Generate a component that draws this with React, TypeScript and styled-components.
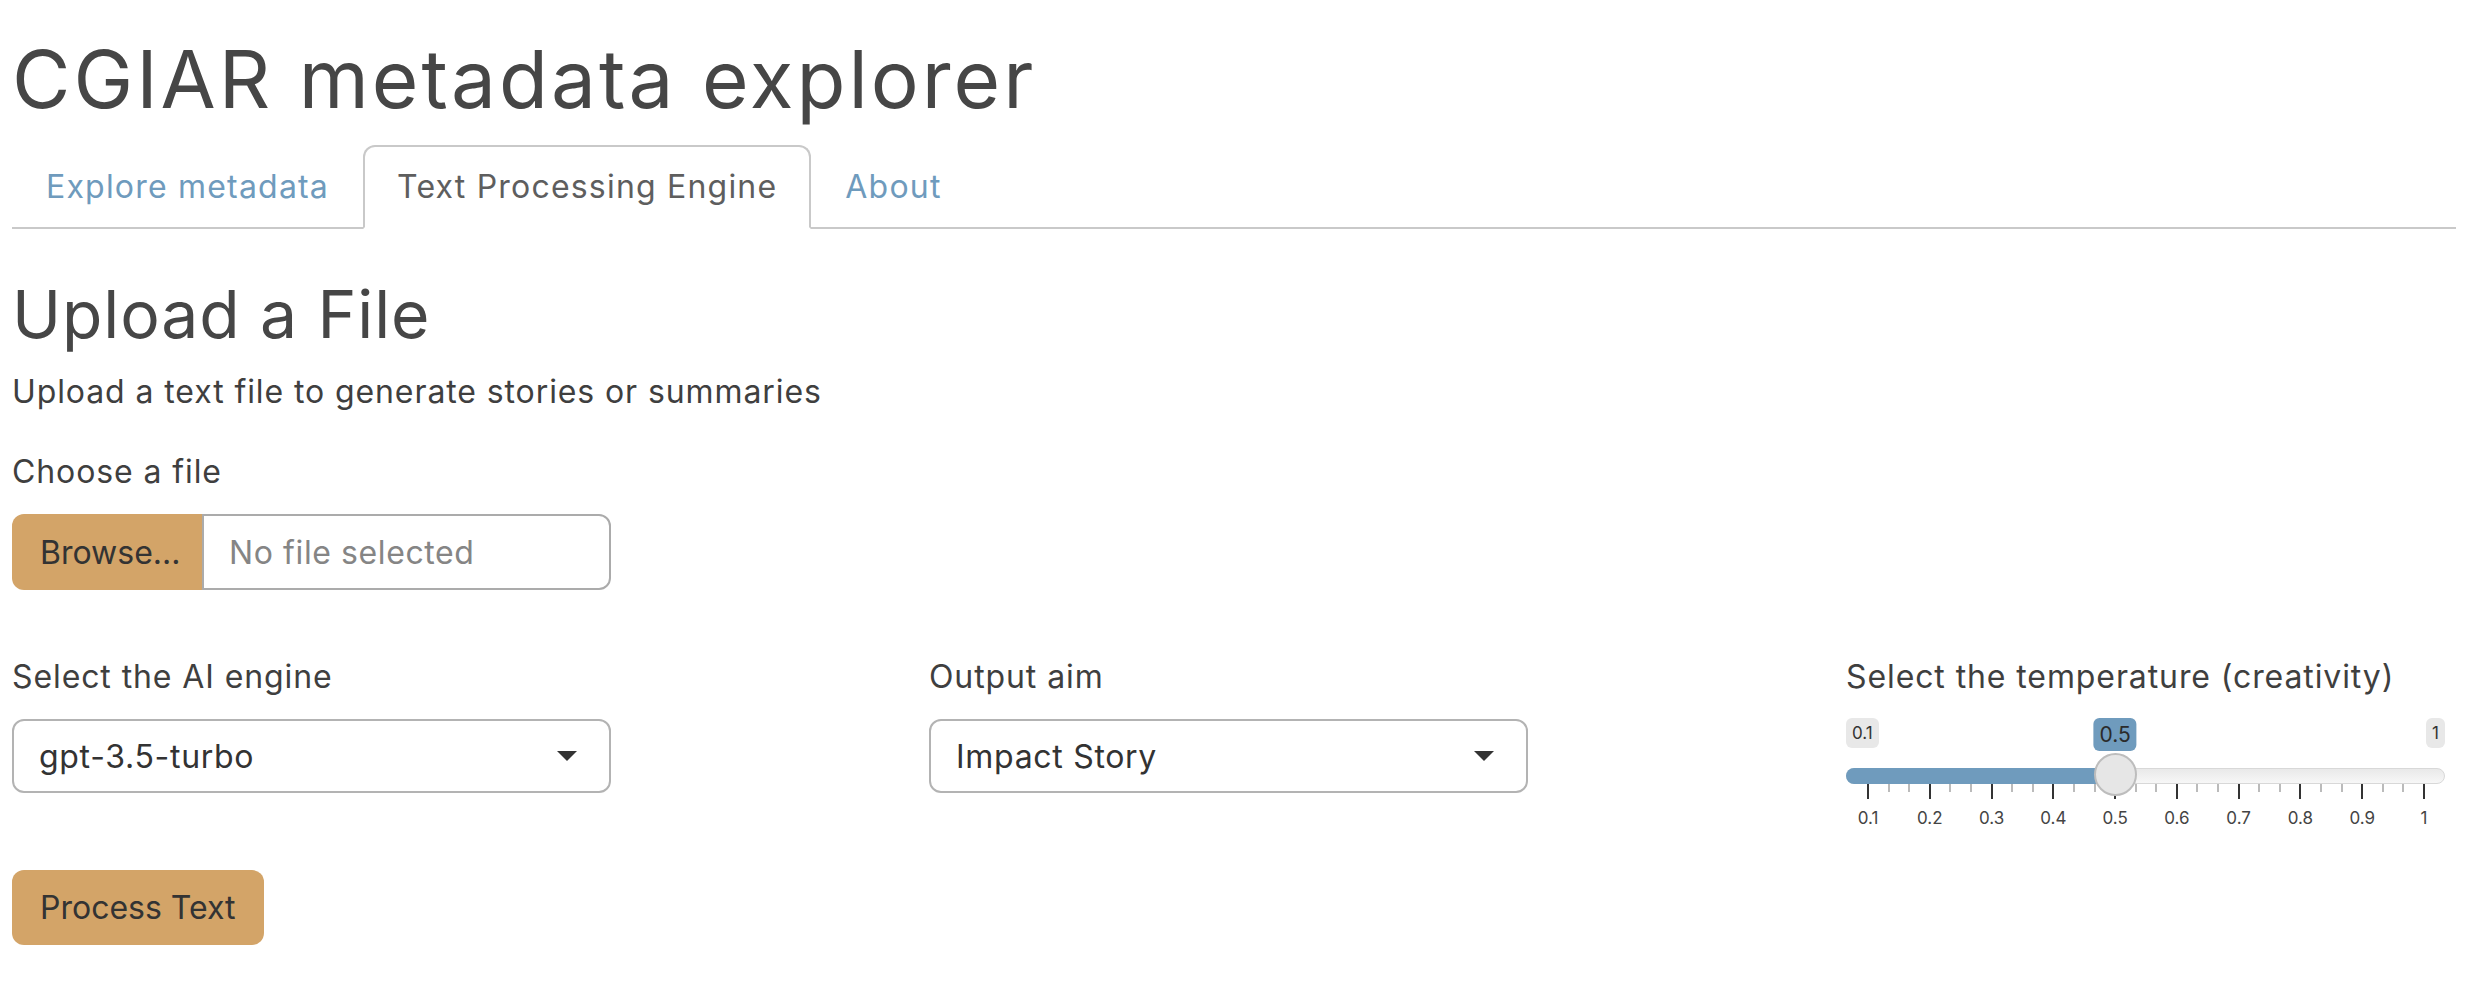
import styled, { createGlobalStyle } from 'styled-components';

const GlobalStyle = createGlobalStyle`
  html, body {
    margin: 0;
    padding: 0;
    background: #fff;
    overflow: hidden;
  }
  body {
    font-family: Inter, "Liberation Sans", sans-serif;
    color: #444;
    letter-spacing: 0.9px;
  }
  * {
    box-sizing: border-box;
  }
`;

const tabs = ['Explore metadata', 'Text Processing Engine', 'About'];

const sliderMin = 0.1;
const sliderMax = 1;
const sliderValue = 0.5;
const gridLeft = 22;
const gridWidth = 556;
const gridSteps = [0.1, 0.2, 0.3, 0.4, 0.5, 0.6, 0.7, 0.8, 0.9, 1];

const toX = (v: number) => gridLeft + ((v - sliderMin) / (sliderMax - sliderMin)) * gridWidth;

export default function App() {
  const handleX = toX(sliderValue);
  const step = gridWidth / (gridSteps.length - 1);

  return (
    <Page>
      <GlobalStyle />
      <AppTitle>CGIAR metadata explorer</AppTitle>
      <TabBar>
        {tabs.map((t) => (
          <Tab key={t} $active={t === 'Text Processing Engine'}>
            {t}
          </Tab>
        ))}
      </TabBar>

      <Heading>Upload a File</Heading>
      <Lead>Upload a text file to generate stories or summaries</Lead>

      <FieldLabel>Choose a file</FieldLabel>
      <FileGroup>
        <BrowseButton>Browse...</BrowseButton>
        <FileName>No file selected</FileName>
      </FileGroup>

      <InputRow>
        <Column>
          <FieldLabel>Select the AI engine</FieldLabel>
          <SelectBox>
            <span>gpt-3.5-turbo</span>
            <Caret />
          </SelectBox>
        </Column>
        <Column>
          <FieldLabel>Output aim</FieldLabel>
          <SelectBox>
            <span>Impact Story</span>
            <Caret />
          </SelectBox>
        </Column>
        <Column>
          <FieldLabel>Select the temperature (creativity)</FieldLabel>
          <SliderBox>
            <EdgeTag $side="left">0.1</EdgeTag>
            <ValueTag style={{ left: handleX }}>0.5</ValueTag>
            <EdgeTag $side="right">1</EdgeTag>
            <Track />
            <TrackFill style={{ width: handleX }} />
            {gridSteps.map((v, i) => (
              <div key={v}>
                <Tick $major style={{ left: toX(v) - 1 }} />
                <TickLabel style={{ left: toX(v) }}>{v}</TickLabel>
                {i < gridSteps.length - 1 && (
                  <>
                    <Tick style={{ left: toX(v) + step / 3 - 1 }} />
                    <Tick style={{ left: toX(v) + (2 * step) / 3 - 1 }} />
                  </>
                )}
              </div>
            ))}
            <Handle style={{ left: handleX - 21.5 }} />
          </SliderBox>
        </Column>
      </InputRow>

      <ActionButton>Process Text</ActionButton>
    </Page>
  );
}

const Page = styled.div`
  padding: 31px 12px 0;
`;

const AppTitle = styled.h1`
  margin: 0 0 18px;
  font-size: 80px;
  line-height: 96px;
  font-weight: 400;
  letter-spacing: 3px;
  color: #464646;
`;

const TabBar = styled.nav`
  display: flex;
  border-bottom: 2px solid #c9c9c9;
`;

const Tab = styled.a<{ $active?: boolean }>`
  display: block;
  margin-bottom: -2px;
  padding: 16px 32px;
  font-size: 32px;
  line-height: 48px;
  letter-spacing: 1.2px;
  text-decoration: none;
  border: 2px solid ${({ $active }) => ($active ? '#c9c9c9' : 'transparent')};
  border-bottom-color: ${({ $active }) => ($active ? '#fff' : 'transparent')};
  border-radius: 12px 12px 0 0;
  background: ${({ $active }) => ($active ? '#fff' : 'transparent')};
  color: ${({ $active }) => ($active ? '#5e5e5e' : '#6f9bbd')};
`;

const Heading = styled.h2`
  margin: 46px 0 14px;
  font-size: 66px;
  line-height: 79px;
  font-weight: 400;
  color: #464646;
`;

const Lead = styled.p`
  margin: 0 0 32px;
  font-size: 32px;
  line-height: 48px;
  color: #3f3f3f;
`;

const FieldLabel = styled.label`
  display: block;
  margin: 0 0 18px;
  font-size: 32px;
  line-height: 48px;
  color: #3f3f3f;
  white-space: nowrap;
`;

const FileGroup = styled.div`
  display: flex;
  width: 599px;
  height: 76px;
`;

const BrowseButton = styled.div`
  display: flex;
  align-items: center;
  width: 190px;
  padding-left: 28px;
  border-radius: 12px 0 0 12px;
  background: #d3a468;
  color: #333;
  font-size: 32px;
  letter-spacing: 0;
`;

const FileName = styled.div`
  flex: 1;
  display: flex;
  align-items: center;
  padding-left: 25px;
  border: 2px solid #ababab;
  border-radius: 0 12px 12px 0;
  color: #858585;
  font-size: 32px;
  letter-spacing: 0.6px;
`;

const InputRow = styled.div`
  display: grid;
  grid-template-columns: 917px 917px 1fr;
  align-items: start;
  margin-top: 63px;
`;

const Column = styled.div`
  display: flex;
  flex-direction: column;
`;

const SelectBox = styled.div`
  display: flex;
  align-items: center;
  justify-content: space-between;
  width: 599px;
  height: 74px;
  padding: 0 32px 0 25px;
  border: 2px solid #b3b3b3;
  border-radius: 12px;
  color: #333;
  font-size: 32px;
  letter-spacing: 0.7px;
`;

const Caret = styled.span`
  width: 0;
  height: 0;
  border-left: 10px solid transparent;
  border-right: 10px solid transparent;
  border-top: 10px solid #333;
`;

const SliderBox = styled.div`
  position: relative;
  width: 599px;
  height: 113px;
  margin-top: -1px;
  letter-spacing: 0;
`;

const EdgeTag = styled.span<{ $side: 'left' | 'right' }>`
  position: absolute;
  top: 0;
  ${({ $side }) => ($side === 'left' ? 'left: 0;' : 'right: 0;')}
  height: 30px;
  padding: 0 6px;
  border-radius: 6px;
  background: #e8e8e8;
  color: #333;
  font-size: 17px;
  line-height: 30px;
`;

const ValueTag = styled.span`
  position: absolute;
  top: 0;
  transform: translateX(-50%);
  height: 33px;
  padding: 0 6px;
  border-radius: 6px;
  background: #6f9bbd;
  color: #2b2b2b;
  font-size: 21px;
  line-height: 33px;
`;

const Track = styled.div`
  position: absolute;
  left: 0;
  right: 0;
  top: 50px;
  height: 16px;
  border: 1px solid #d8d8d8;
  border-radius: 8px;
  background: linear-gradient(#e9e9e9, #f7f7f7);
`;

const TrackFill = styled.div`
  position: absolute;
  left: 0;
  top: 50px;
  height: 16px;
  border-radius: 8px 0 0 8px;
  background: #6f9bbd;
`;

const Handle = styled.div`
  position: absolute;
  top: 35px;
  width: 43px;
  height: 43px;
  border: 2px solid #bdbdbd;
  border-radius: 50%;
  background: #e6e6e6;
`;

const Tick = styled.div<{ $major?: boolean }>`
  position: absolute;
  top: 66px;
  width: 2px;
  height: ${({ $major }) => ($major ? '15px' : '8px')};
  background: ${({ $major }) => ($major ? '#333' : '#bbb')};
`;

const TickLabel = styled.span`
  position: absolute;
  top: 88px;
  transform: translateX(-50%);
  color: #444;
  font-size: 17px;
  line-height: 24px;
`;

const ActionButton = styled.div`
  display: inline-flex;
  align-items: center;
  height: 75px;
  margin-top: 39px;
  padding: 0 28px;
  border-radius: 12px;
  background: #d3a468;
  color: #333;
  font-size: 32px;
  letter-spacing: 0;
`;
